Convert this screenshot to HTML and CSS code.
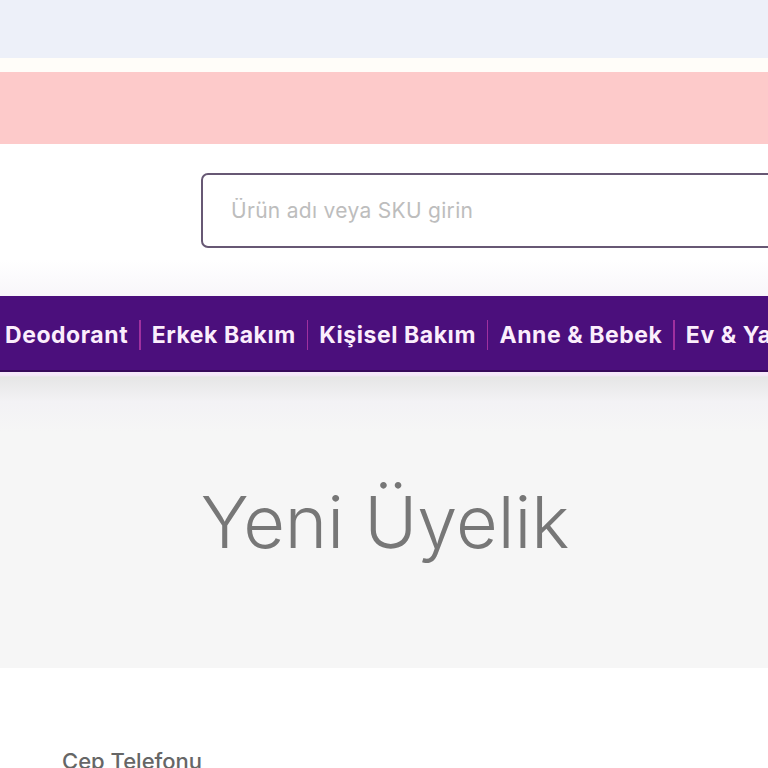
FILE: index.html
```html
<!DOCTYPE html>
<html lang="tr">
<head>
<meta charset="utf-8">
<title>Yeni Üyelik</title>
<link rel="stylesheet" href="styles.css">
</head>
<body>
<div class="topbar"></div>
<div class="gap"></div>
<div class="notice"></div>
<header class="header">
  <div class="search">
    <input class="search-input" type="text" placeholder="Ürün adı veya SKU girin">
  </div>
</header>
<nav class="nav">
  <a class="nav-item">Deodorant</a>
  <span class="sep"></span>
  <a class="nav-item">Erkek Bakım</a>
  <span class="sep"></span>
  <a class="nav-item">Kişisel Bakım</a>
  <span class="sep"></span>
  <a class="nav-item">Anne &amp; Bebek</a>
  <span class="sep"></span>
  <a class="nav-item">Ev &amp; Yaşam</a>
</nav>
<section class="hero">
  <h1 class="title">Yeni Üyelik</h1>
</section>
<section class="form">
  <label class="label">Cep Telefonu</label>
</section>
</body>
</html>
```
FILE: styles.css
```css
* { box-sizing: border-box; }
html, body { margin: 0; padding: 0; overflow: hidden; }
body { width: 768px; font-family: Inter, "Noto Sans", sans-serif; background: #fff; }

.topbar { height: 58px; background: #edf0f9; }
.gap { height: 14px; background: #fffdf9; }
.notice { height: 72px; background: #fdcaca; }

.header {
  height: 152px;
  padding: 29px 0 0 201px;
  background: linear-gradient(#fff 0, #fff 116px, #f8f6fa 152px);
}
.search { width: 600px; }
.search-input {
  display: block;
  width: 100%;
  height: 75px;
  border: 2px solid #675874;
  border-radius: 7px;
  padding: 0 0 0 28px;
  font-family: Inter, "Noto Sans", sans-serif;
  font-size: 21px;
  letter-spacing: 0.3px;
  color: #333;
  background: #fff;
  outline: none;
}
.search-input::placeholder { color: #bdbdbd; }

.nav {
  height: 76px;
  background: #4b0f7c;
  border-bottom: 2px solid #36095a;
  display: flex;
  align-items: center;
  gap: 11px;
  padding: 3px 0 0 5px;
  white-space: nowrap;
}
.nav-item {
  color: #fbeefc;
  font-family: Inter, "Noto Sans", sans-serif;
  font-weight: 700;
  font-size: 23px;
  letter-spacing: 0.55px;
  flex: none;
}
.sep {
  width: 1.5px;
  height: 30px;
  background: #a0309f;
  flex: none;
}

.hero {
  height: 296px;
  background: linear-gradient(#f5e8fa 0, #f5e8fa 3px, #e6e6e6 5px, #f3f2f5 30px, #f6f6f6 60px);
  display: flex;
  align-items: center;
  justify-content: center;
  padding-left: 2px;
}
.title {
  margin: 2px 0 0;
  font-family: Inter, "Noto Sans", sans-serif;
  font-weight: 300;
  font-size: 72px;
  color: #777;
  letter-spacing: 0;
}

.form { padding: 80px 0 0 62px; background: #fff; height: 200px; }
.label {
  font-family: Inter, "Noto Sans", sans-serif;
  font-weight: 500;
  font-size: 22px;
  color: #666;
}
```
